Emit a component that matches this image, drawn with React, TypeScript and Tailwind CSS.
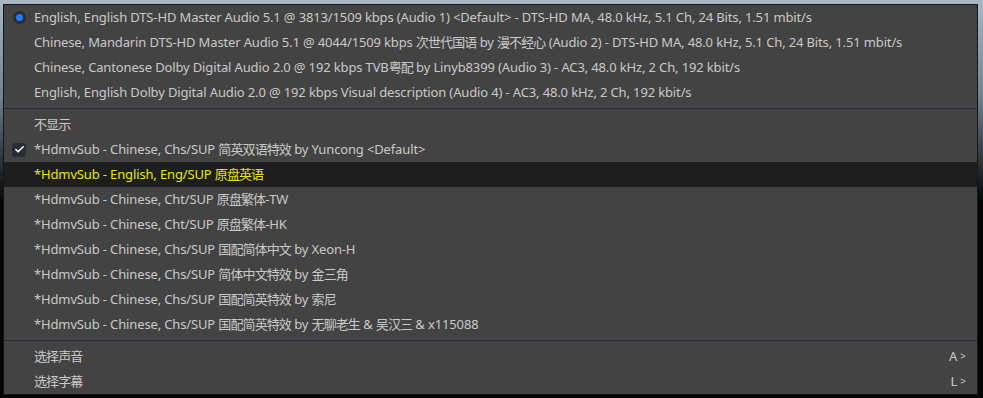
import { Check } from "lucide-react";

type Item = {
  label: string;
  mark?: "radio" | "check";
  active?: boolean;
  shortcut?: string;
};

const audio: Item[] = [
  {
    label:
      "English, English DTS-HD Master Audio 5.1 @ 3813/1509 kbps (Audio 1) <Default> - DTS-HD MA, 48.0 kHz, 5.1 Ch, 24 Bits, 1.51 mbit/s",
    mark: "radio",
  },
  {
    label:
      "Chinese, Mandarin DTS-HD Master Audio 5.1 @ 4044/1509 kbps 次世代国语 by 漫不经心 (Audio 2) - DTS-HD MA, 48.0 kHz, 5.1 Ch, 24 Bits, 1.51 mbit/s",
  },
  {
    label:
      "Chinese, Cantonese Dolby Digital Audio 2.0 @ 192 kbps TVB粤配 by Linyb8399 (Audio 3) - AC3, 48.0 kHz, 2 Ch, 192 kbit/s",
  },
  {
    label:
      "English, English Dolby Digital Audio 2.0 @ 192 kbps Visual description (Audio 4) - AC3, 48.0 kHz, 2 Ch, 192 kbit/s",
  },
];

const subs: Item[] = [
  { label: "不显示" },
  { label: "*HdmvSub - Chinese, Chs/SUP 简英双语特效 by Yuncong <Default>", mark: "check" },
  { label: "*HdmvSub - English, Eng/SUP 原盘英语", active: true },
  { label: "*HdmvSub - Chinese, Cht/SUP 原盘繁体-TW" },
  { label: "*HdmvSub - Chinese, Cht/SUP 原盘繁体-HK" },
  { label: "*HdmvSub - Chinese, Chs/SUP 国配简体中文 by Xeon-H" },
  { label: "*HdmvSub - Chinese, Chs/SUP 简体中文特效 by 金三角" },
  { label: "*HdmvSub - Chinese, Chs/SUP 国配简英特效 by 索尼" },
  { label: "*HdmvSub - Chinese, Chs/SUP 国配简英特效 by 无聊老生 & 吴汉三 & x115088" },
];

const extra: Item[] = [
  { label: "选择声音", shortcut: "A" },
  { label: "选择字幕", shortcut: "L" },
];

// CJK glyphs come out a little wider than in the original font
function Label({ text }: { text: string }) {
  const parts = text.split(/([\u4e00-\u9fff]+)/);
  return (
    <span className="flex-1 whitespace-nowrap tracking-[-0.14px]">
      {parts.map((p, i) =>
        /[\u4e00-\u9fff]/.test(p) ? (
          <span key={i} className="tracking-[-0.9px]">
            {p}
          </span>
        ) : (
          p
        )
      )}
    </span>
  );
}

function Row({ item }: { item: Item }) {
  return (
    <div
      className={`flex h-[25px] items-center ${
        item.active ? "bg-[#1e1e1e] text-[#e8e800]" : "text-[#c9c9c9]"
      }`}
    >
      <div className="flex w-[30px] items-center justify-center">
        {item.mark === "radio" && (
          <span className="flex h-[13px] w-[13px] items-center justify-center rounded-full bg-[#2a2c33]">
            <span className="h-[7px] w-[7px] rounded-full bg-[#1f7cff]" />
          </span>
        )}
        {item.mark === "check" && (
          <span className="flex h-[14px] w-[14px] items-center justify-center rounded-[3px] bg-[#2c2c36]">
            <Check size={11} strokeWidth={3.5} className="text-white" />
          </span>
        )}
      </div>
      <Label text={item.label} />
      {item.shortcut && (
        <span className="mr-[11px] flex items-center gap-[3px]">
          <span className="text-[#c9c9c9]">{item.shortcut}</span>
          <span className="text-[10px] text-[#c9c9c9]">&gt;</span>
        </span>
      )}
    </div>
  );
}

function Separator() {
  return (
    <div className="flex h-[7px] items-center">
      <div className="h-px w-full bg-[#2a2a30]" />
    </div>
  );
}

export default function App() {
  return (
    <div
      className="relative h-[398px] w-[983px] overflow-hidden bg-[#050505] text-[13px]"
      style={{ fontFamily: '"Microsoft YaHei", "Noto Sans", "Noto Sans CJK SC", sans-serif' }}
    >
      <div className="absolute inset-x-0 top-0 h-[200px] bg-gradient-to-b from-[#a9b9c4] via-[#6c7f8c] to-[#0a0a0a]" />
      <div className="absolute left-[3px] top-[4px] h-[391px] w-[975px] border border-[#161616] bg-[#434343]">
        {audio.map((item) => (
          <Row key={item.label} item={item} />
        ))}
        <Separator />
        {subs.map((item) => (
          <Row key={item.label} item={item} />
        ))}
        <Separator />
        {extra.map((item) => (
          <Row key={item.label} item={item} />
        ))}
      </div>
    </div>
  );
}
